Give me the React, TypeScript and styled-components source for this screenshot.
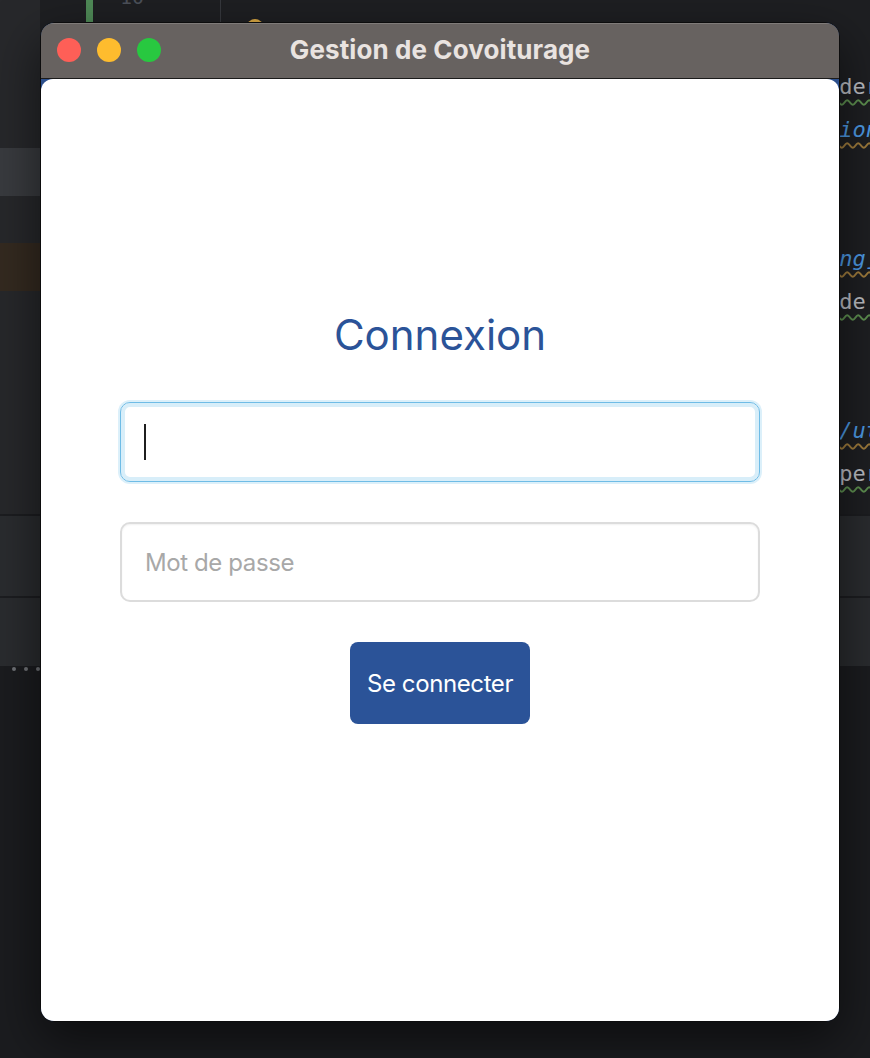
import React from "react";
import styled, { createGlobalStyle } from "styled-components";

const GlobalStyle = createGlobalStyle`
  html, body { margin: 0; padding: 0; background: #1a1b1e; }
  body { font-family: Inter, "Noto Sans", sans-serif; }
  * { box-sizing: border-box; }
`;

const Desktop = styled.div`
  position: relative;
  width: 870px;
  height: 1058px;
  overflow: hidden;
  display: flex;
  flex-direction: column;
  background: #1a1b1e;
`;

const Upper = styled.div`
  display: flex;
  height: 514px;
  flex: none;
`;

const LeftRail = styled.div`
  width: 40px;
  flex: none;
  background: #27282b;
  display: flex;
  flex-direction: column;
  padding-top: 148px;
  gap: 47px;
`;

const RailBand = styled.div<{ $tone: string }>`
  height: 48px;
  background: ${(p) => p.$tone};
`;

const Gutter = styled.div`
  width: 181px;
  flex: none;
  background: #1e1f22;
  border-right: 1px solid #36383d;
  display: flex;
  align-items: flex-start;
  padding-left: 46px;
`;

const ChangeMarker = styled.div`
  width: 7px;
  height: 40px;
  background: #4f8a57;
`;

const LineNumber = styled.div`
  margin-left: 27px;
  margin-top: -15px;
  font-family: "DejaVu Sans Mono", monospace;
  font-size: 20px;
  line-height: 24px;
  color: #4b5059;
`;

const CodeArea = styled.div`
  flex: 1;
  min-width: 0;
  background: #1e1f22;
  display: flex;
  flex-direction: column;
  overflow: hidden;
`;

const MarkerRow = styled.div`
  height: 65px;
  flex: none;
  padding: 19px 0 0 26px;
`;

const BulbDot = styled.div`
  width: 16px;
  height: 16px;
  border-radius: 50%;
  background: #dba944;
`;

const CodeLine = styled.div`
  height: 43px;
  flex: none;
  display: flex;
  justify-content: flex-end;
  align-items: center;
  margin-right: -9px;
  font-family: "DejaVu Sans Mono", monospace;
  font-size: 22px;
  white-space: pre;
`;

const Token = styled.span<{ $kind: "plain" | "ident" }>`
  color: ${(p) => (p.$kind === "ident" ? "#4d9be6" : "#bcbec4")};
  font-style: ${(p) => (p.$kind === "ident" ? "italic" : "normal")};
  text-decoration: underline wavy ${(p) => (p.$kind === "ident" ? "#a07c3c" : "#5e9150")};
  text-decoration-thickness: 1.5px;
  text-underline-offset: 5px;
`;

const Panel = styled.div<{ $h: number }>`
  height: ${(p) => p.$h}px;
  flex: none;
  background: #2a2c2f;
  border-top: 2px solid #1c1d20;
`;

const Footer = styled.div`
  flex: 1;
  background: #1b1c1f;
  display: flex;
  gap: 8px;
  padding: 1px 0 0 12px;
`;

const StatusDot = styled.div`
  width: 4px;
  height: 4px;
  border-radius: 50%;
  background: #6f7277;
`;

const Window = styled.div`
  position: absolute;
  left: 40px;
  top: 22px;
  width: 800px;
  height: 1000px;
  border: 1px solid #0c0c0d;
  border-radius: 14px;
  overflow: hidden;
  display: flex;
  flex-direction: column;
  background: #2c4f8c;
  box-shadow: 0 18px 50px rgba(0, 0, 0, 0.55);
`;

const TitleBar = styled.div`
  height: 56px;
  flex: none;
  background: #676260;
  border-bottom: 1px solid #1b1b1b;
  box-shadow: inset 0 1px 0 rgba(255, 255, 255, 0.16);
  display: grid;
  grid-template-columns: 1fr auto 1fr;
  align-items: center;
  padding: 0 16px 2px;
`;

const Lights = styled.div`
  display: flex;
  gap: 16px;
`;

const Light = styled.span<{ $color: string }>`
  width: 24px;
  height: 24px;
  border-radius: 50%;
  background: ${(p) => p.$color};
`;

const Title = styled.div`
  font-family: Inter, "Noto Sans", sans-serif;
  font-weight: 700;
  font-size: 26px;
  color: #e9e3e0;
  letter-spacing: 0.1px;
`;

const Content = styled.main`
  flex: 1;
  background: #ffffff;
  border-radius: 12px 12px 0 0;
  display: flex;
  flex-direction: column;
  align-items: center;
  padding-top: 230px;
`;

const Heading = styled.h1`
  margin: 0;
  font-family: Inter, "Noto Sans", sans-serif;
  font-weight: 400;
  font-size: 42px;
  line-height: 52px;
  color: #2b5398;
`;

const Form = styled.form`
  margin-top: 41px;
  display: flex;
  flex-direction: column;
  align-items: center;
  gap: 40px;
`;

const FocusedField = styled.div`
  width: 640px;
  height: 80px;
  border: 1px solid #6fbce6;
  border-radius: 10px;
  box-shadow: 0 0 0 2px #dcf0fa, inset 0 0 0 4px #d8eef9;
  background: #fff;
  display: flex;
  align-items: center;
  padding: 0 23px;
`;

const Caret = styled.span`
  width: 2px;
  height: 36px;
  flex: none;
  background: #1f1f1f;
`;

const BareInput = styled.input`
  flex: 1;
  min-width: 0;
  border: none;
  outline: none;
  background: transparent;
  font-family: Inter, "Noto Sans", sans-serif;
  font-size: 24px;
  caret-color: transparent;
`;

const TextField = styled.input`
  width: 640px;
  height: 80px;
  border: 2px solid #dcdcdc;
  border-radius: 10px;
  box-shadow: inset 0 1px 2px rgba(0, 0, 0, 0.06);
  padding: 0 23px;
  outline: none;
  font-family: Inter, "Noto Sans", sans-serif;
  font-size: 24px;
  letter-spacing: -0.4px;
  color: #222;
  &::placeholder {
    color: #a8a8a8;
  }
`;

const SubmitButton = styled.button`
  height: 82px;
  padding: 0 17px;
  border: none;
  border-radius: 8px;
  background: #2b5398;
  color: #fff;
  font-family: Inter, "Noto Sans", sans-serif;
  font-size: 24px;
  letter-spacing: -0.4px;
  cursor: pointer;
`;

type Frag = { text: string; kind: "plain" | "ident" } | null;

const codeLines: Frag[] = [
  { text: "der", kind: "plain" },
  { text: "ion", kind: "ident" },
  null,
  null,
  { text: "ng]", kind: "ident" },
  { text: "de ", kind: "plain" },
  null,
  null,
  { text: "/ut", kind: "ident" },
  { text: "per", kind: "plain" },
];

export default function App() {
  return (
    <>
      <GlobalStyle />
      <Desktop>
        <Upper>
          <LeftRail>
            <RailBand $tone="#393b3f" />
            <RailBand $tone="#342a20" />
          </LeftRail>
          <Gutter>
            <ChangeMarker />
            <LineNumber>10</LineNumber>
          </Gutter>
          <CodeArea>
            <MarkerRow>
              <BulbDot />
            </MarkerRow>
            {codeLines.map((l, i) => (
              <CodeLine key={i}>
                {l ? <Token $kind={l.kind}>{l.text}</Token> : null}
              </CodeLine>
            ))}
          </CodeArea>
        </Upper>
        <Panel $h={82} />
        <Panel $h={70} />
        <Footer>
          <StatusDot />
          <StatusDot />
          <StatusDot />
          <StatusDot />
        </Footer>

        <Window>
          <TitleBar>
            <Lights>
              <Light $color="#fe5f57" />
              <Light $color="#febc2e" />
              <Light $color="#28c840" />
            </Lights>
            <Title>Gestion de Covoiturage</Title>
            <span />
          </TitleBar>
          <Content>
            <Heading>Connexion</Heading>
            <Form onSubmit={(e) => e.preventDefault()}>
              <FocusedField>
                <Caret />
                <BareInput aria-label="Identifiant" />
              </FocusedField>
              <TextField type="password" placeholder="Mot de passe" />
              <SubmitButton type="submit">Se connecter</SubmitButton>
            </Form>
          </Content>
        </Window>
      </Desktop>
    </>
  );
}
